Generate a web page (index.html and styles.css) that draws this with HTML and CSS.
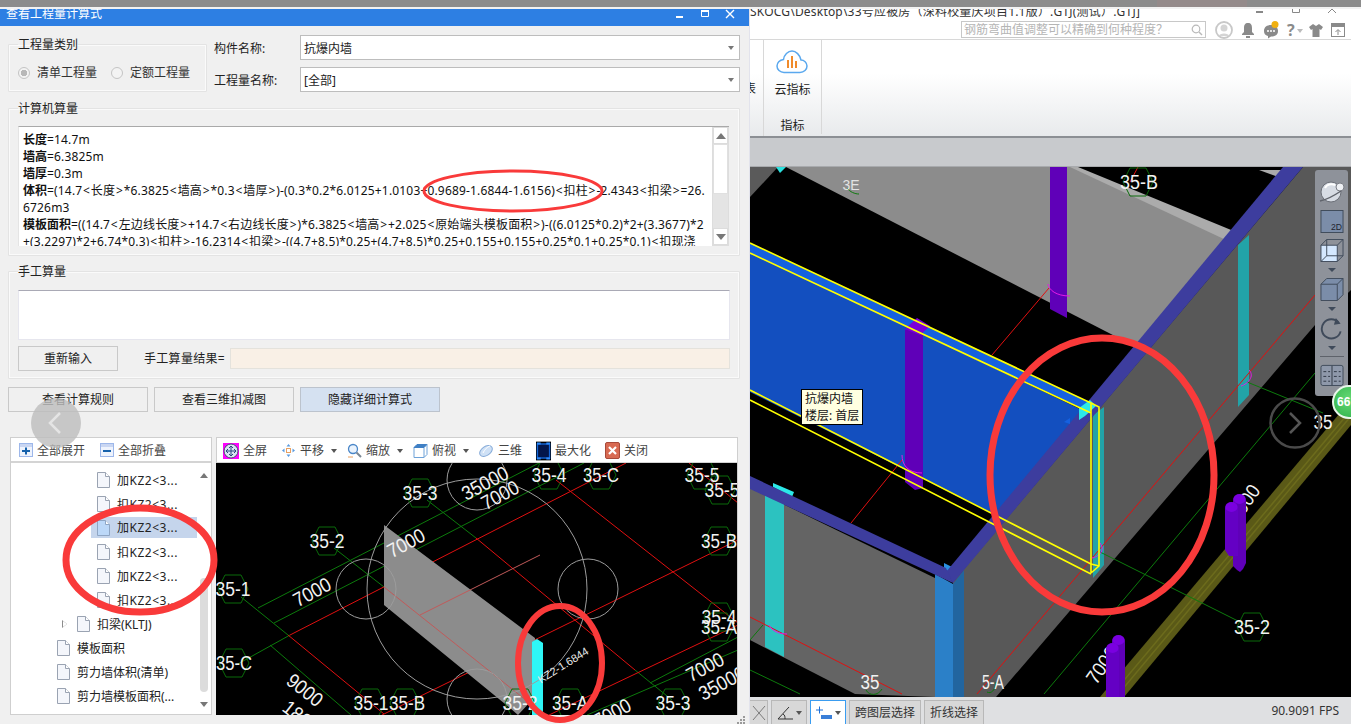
FILE: index.html
```html
<!DOCTYPE html>
<html lang="zh-CN">
<head>
<meta charset="utf-8">
<title>查看工程量计算式</title>
<link rel="stylesheet" href="styles.css">
</head>
<body>
<svg class="defs" width="0" height="0" aria-hidden="true">
  <defs>
    <symbol id="doc" viewBox="0 0 13 16">
      <path d="M.5.5h8l4 4v11H.5z" fill="#f4f6fb" stroke="#9aa3b2"/>
      <path d="M8.5.5v4h4" fill="#fff" stroke="#9aa3b2"/>
    </symbol>
    <symbol id="docsel" viewBox="0 0 13 16">
      <path d="M.5.5h8l4 4v11H.5z" fill="#bcd8f8" stroke="#8fa6c4"/>
      <path d="M8.5.5v4h4" fill="#fff" stroke="#8fa6c4"/>
    </symbol>
    <polygon id="hex" points="-15,0 -8,-14 8,-14 15,0 8,14 -8,14" fill="none" stroke="#0a6b0a"/>
  </defs>
</svg>

<div class="strip"><span class="strip-tint"></span></div>

<div class="desk">
  <section class="dialog">
    <header class="dlg-title">
      <span class="dlg-name">查看工程量计算式</span>
      <span class="dlg-ctl">
        <svg width="10" height="10" viewBox="0 0 10 10"><path d="M1 7h7v2H1z" fill="#fff"/></svg>
        <svg width="10" height="10" viewBox="0 0 10 10"><path d="M1.500 1.500h7v6h-7z" fill="none" stroke="#fff"/><path d="M1 1h8v2H1z" fill="#fff"/></svg>
        <svg width="10" height="10" viewBox="0 0 10 10"><path d="M1 1l8 8M9 1l-8 8" stroke="#fff" stroke-width="1.400"/></svg>
      </span>
    </header>

    <div class="top-row">
      <fieldset class="group kind">
        <legend>工程量类别</legend>
        <div class="radios">
          <span class="radio on"></span><span class="radio-label">清单工程量</span>
          <span class="radio"></span><span class="radio-label">定额工程量</span>
        </div>
      </fieldset>
      <div class="combos">
        <div class="combo-row"><label>构件名称:</label><div class="combo">抗爆内墙<i class="caret"></i></div></div>
        <div class="combo-row"><label>工程量名称:</label><div class="combo">[全部]<i class="caret"></i></div></div>
      </div>
    </div>

    <fieldset class="group calc">
      <legend>计算机算量</legend>
      <div class="formula">
        <div class="formula-text">
          <div><b>长度</b>=14.7m</div>
          <div><b>墙高</b>=6.3825m</div>
          <div><b>墙厚</b>=0.3m</div>
          <div><b>体积</b>=(14.7<s>&lt;</s>长度<s>&gt;</s>*6.3825<s>&lt;</s>墙高<s>&gt;</s>*0.3<s>&lt;</s>墙厚<s>&gt;</s>)-(0.3*0.2*6.0125+1.0103+0.9689-1.6844-1.6156)<s>&lt;</s>扣柱<s>&gt;</s>-2.4343<s>&lt;</s>扣梁<s>&gt;</s>=26.</div>
          <div>6726m3</div>
          <div><b>模板面积</b>=((14.7<s>&lt;</s>左边线长度<s>&gt;</s>+14.7<s>&lt;</s>右边线长度<s>&gt;</s>)*6.3825<s>&lt;</s>墙高<s>&gt;</s>+2.025<s>&lt;</s>原始端头模板面积<s>&gt;</s>)-((6.0125*0.2)*2+(3.3677)*2</div>
          <div>+(3.2297)*2+6.74*0.3)<s>&lt;</s>扣柱<s>&gt;</s>-16.2314<s>&lt;</s>扣梁<s>&gt;</s>-((4.7+8.5)*0.25+(4.7+8.5)*0.25+0.155+0.155+0.25*0.1+0.25*0.1)<s>&lt;</s>扣现浇</div>
        </div>
        <div class="vscroll">
          <span class="vbtn"><i class="tri up"></i></span>
          <span class="vthumb"></span>
          <span class="vtrack"></span>
          <span class="vbtn"><i class="tri down"></i></span>
        </div>
      </div>
    </fieldset>

    <fieldset class="group manual">
      <legend>手工算量</legend>
      <div class="manual-box"></div>
      <div class="manual-row">
        <button class="btn reset">重新输入</button>
        <span class="result-label">手工算量结果=</span>
        <span class="result"></span>
      </div>
    </fieldset>

    <div class="actions">
      <button class="btn act">查看计算规则</button>
      <button class="btn act">查看三维扣减图</button>
      <button class="btn act active">隐藏详细计算式</button>
    </div>

    <div class="panels">
      <aside class="tree-panel">
        <div class="tree-tools">
          <span class="tool">
            <svg width="14" height="14" viewBox="0 0 14 14"><rect x=".5" y=".5" width="13" height="13" fill="#eef3fd" stroke="#9db7ea"/><rect x="1" y="1" width="12" height="3" fill="#c9d6f2"/><path d="M3 8h8M7 4.500v7" stroke="#1561ab" stroke-width="2"/></svg>全部展开
          </span>
          <span class="tool">
            <svg width="14" height="14" viewBox="0 0 14 14"><rect x=".5" y=".5" width="13" height="13" fill="#eef3fd" stroke="#9db7ea"/><rect x="1" y="1" width="12" height="3" fill="#c9d6f2"/><path d="M3 8h8" stroke="#1561ab" stroke-width="2"/></svg>全部折叠
          </span>
        </div>
        <div class="tree">
          <div class="node lv3"><svg class="ic"><use href="#doc"/></svg>加KZ2&lt;3...</div>
          <div class="node lv3"><svg class="ic"><use href="#doc"/></svg>扣KZ2&lt;3...</div>
          <div class="node lv3 selected"><svg class="ic"><use href="#docsel"/></svg>加KZ2&lt;3...</div>
          <div class="node lv3"><svg class="ic"><use href="#doc"/></svg>扣KZ2&lt;3...</div>
          <div class="node lv3"><svg class="ic"><use href="#doc"/></svg>加KZ2&lt;3...</div>
          <div class="node lv3"><svg class="ic"><use href="#doc"/></svg>扣KZ2&lt;3...</div>
          <div class="node lv2"><i class="expander"></i><svg class="ic"><use href="#doc"/></svg>扣梁(KLTJ)</div>
          <div class="node lv1"><svg class="ic"><use href="#doc"/></svg>模板面积</div>
          <div class="node lv1"><svg class="ic"><use href="#doc"/></svg>剪力墙体积(清单)</div>
          <div class="node lv1"><svg class="ic"><use href="#doc"/></svg>剪力墙模板面积(...</div>
          <div class="tree-scroll"><i class="tri up small"></i><span class="tree-thumb"></span><i class="tri down small"></i></div>
        </div>
      </aside>

      <div class="view-panel">
        <div class="view-tools">
          <span class="tool v"><svg width="16" height="16" viewBox="0 0 16 16"><rect width="16" height="16" fill="#f0f"/><circle cx="8" cy="8" r="7" fill="#d9e3f2" stroke="#41506e"/><path d="M8 3v10M3 8h10M8 3l-2 2M8 3l2 2M8 13l-2-2M8 13l2-2M3 8l2-2M3 8l2 2M13 8l-2-2M13 8l-2 2" stroke="#2a4a80" fill="none"/></svg>全屏</span>
          <span class="tool v"><svg width="15" height="15" viewBox="0 0 15 15"><path d="M7.500 1l2 2.500h-4zM7.500 14l2-2.500h-4zM1 7.500l2.500-2v4zM14 7.500l-2.500-2v4z" fill="#5a9be0"/><rect x="5.500" y="5.500" width="4" height="4" fill="none" stroke="#e8a060"/></svg>平移<i class="caret dark"></i></span>
          <span class="tool v"><svg width="15" height="16" viewBox="0 0 15 16"><circle cx="6" cy="6" r="4.500" fill="#eaf3fd" stroke="#4a86c8" stroke-width="1.300"/><path d="M9.500 9.500l4.500 4.500" stroke="#7a8794" stroke-width="2"/><path d="M1 14h5" stroke="#e8a060"/></svg>缩放<i class="caret dark"></i></span>
          <span class="tool v"><svg width="15" height="16" viewBox="0 0 15 16"><path d="M1 4.500h10v10H1z" fill="#fff" stroke="#6ea2d8"/><path d="M1 4.500L4 1.500h10L11 4.500z" fill="#3f7fc4" stroke="#3f7fc4"/><path d="M14 1.500v10l-3 3" fill="none" stroke="#6ea2d8"/></svg>俯视<i class="caret dark"></i></span>
          <span class="tool v"><svg width="15" height="15" viewBox="0 0 15 15"><ellipse cx="7" cy="8" rx="7" ry="4.500" transform="rotate(-35 7 8)" fill="#cfe1f6" stroke="#86abd8"/><path d="M4 10c2-4 4-6 7-7" stroke="#fff" fill="none"/></svg>三维</span>
          <span class="tool v"><svg width="15" height="20" viewBox="0 0 16 20"><rect width="16" height="20" fill="#000"/><rect x="1.500" y="2.500" width="13" height="15" fill="#03164a" stroke="#1466d8" stroke-width="1.500"/><path d="M1 2h4M11 2h4M1 18h4M11 18h4" stroke="#2d8cff" stroke-width="2"/></svg>最大化</span>
          <span class="tool v"><svg width="15" height="17" viewBox="0 0 15 17"><rect x=".5" y=".5" width="14" height="16" rx="1.500" fill="#d86a52" stroke="#a84a3a"/><path d="M4 5l7 7M11 5l-7 7" stroke="#fff" stroke-width="2.200"/></svg>关闭</span>
        </div>
        <div class="mini-view">
          <svg class="mini" viewBox="216 463 522 252" width="522" height="252">
            <g fill="none" stroke-width="1">
              <g stroke="#0c7a0c">
                <path d="M258 608L539 463M274 623L584 463M236 665L290 635M241 597L288 635M270 645L351 715M334 548L384 587M427 500L476 538M635 670L672 700M650 683L738 637M587 715L738 650"/>
              </g>
              <g stroke="#e01010">
                <path d="M290 635L626 463M382 715L738 540M549 715L738 625M288 635L384 714M384 587L532 705M476 538L635 670M556 480L738 623M689 463L738 503"/>
              </g>
            </g>
            <polygon points="384,525 535,638 532,700 518,715 510,708 384,605" fill="#8c8c8c"/>
            <path d="M384 587L532 705M420 615L540 555" stroke="#c05a5a" fill="none"/>
            <polygon points="532,642 537,639 543,643 543,715 532,715" fill="#2ef6f6"/>
            <g fill="none" stroke="#9c9c9c">
              <circle cx="477" cy="589" r="110"/>
              <circle cx="477" cy="480" r="30"/>
              <circle cx="366" cy="589" r="30"/>
              <circle cx="588" cy="589" r="30"/>
              <circle cx="477" cy="699" r="30"/>
            </g>
            <use href="#hex" x="233" y="589"/><use href="#hex" x="327" y="541"/><use href="#hex" x="420" y="493"/>
            <use href="#hex" x="549" y="475"/><use href="#hex" x="601" y="475"/><use href="#hex" x="702" y="475"/>
            <use href="#hex" x="720" y="490"/><use href="#hex" x="719" y="541"/><use href="#hex" x="719" y="617"/>
            <use href="#hex" x="719" y="627"/><use href="#hex" x="234" y="663"/><use href="#hex" x="370" y="703"/>
            <use href="#hex" x="405" y="703"/><use href="#hex" x="520" y="703"/><use href="#hex" x="570" y="703"/><use href="#hex" x="673" y="703"/>
            <g class="cad">
              <text x="233" y="596" textLength="35" lengthAdjust="spacingAndGlyphs">35-1</text>
              <text x="327" y="548" textLength="35" lengthAdjust="spacingAndGlyphs">35-2</text>
              <text x="420" y="500" textLength="35" lengthAdjust="spacingAndGlyphs">35-3</text>
              <text x="549" y="482" textLength="35" lengthAdjust="spacingAndGlyphs">35-4</text>
              <text x="601" y="482" textLength="36" lengthAdjust="spacingAndGlyphs">35-C</text>
              <text x="702" y="482" textLength="35" lengthAdjust="spacingAndGlyphs">35-5</text>
              <text x="722" y="497" textLength="35" lengthAdjust="spacingAndGlyphs">35-5</text>
              <text x="719" y="548" textLength="36" lengthAdjust="spacingAndGlyphs">35-B</text>
              <text x="719" y="624" textLength="35" lengthAdjust="spacingAndGlyphs">35-4</text>
              <text x="719" y="634" textLength="36" lengthAdjust="spacingAndGlyphs">35-A</text>
              <text x="234" y="670" textLength="36" lengthAdjust="spacingAndGlyphs">35-C</text>
              <text x="371" y="710" textLength="35" lengthAdjust="spacingAndGlyphs">35-1</text>
              <text x="407" y="710" textLength="36" lengthAdjust="spacingAndGlyphs">35-B</text>
              <text x="520" y="710" textLength="35" lengthAdjust="spacingAndGlyphs">35-2</text>
              <text x="570" y="710" textLength="36" lengthAdjust="spacingAndGlyphs">35-A</text>
              <text x="673" y="710" textLength="35" lengthAdjust="spacingAndGlyphs">35-3</text>
              <text x="312" y="599" textLength="40" lengthAdjust="spacingAndGlyphs" transform="rotate(-28 312 592)">7000</text>
              <text x="406" y="550" textLength="40" lengthAdjust="spacingAndGlyphs" transform="rotate(-28 406 543)">7000</text>
              <text x="485" y="490" textLength="50" lengthAdjust="spacingAndGlyphs" transform="rotate(-28 485 483)">35000</text>
              <text x="500" y="502" textLength="40" lengthAdjust="spacingAndGlyphs" transform="rotate(-28 500 495)">7000</text>
              <text x="305" y="697" textLength="40" lengthAdjust="spacingAndGlyphs" transform="rotate(38 305 690)">9000</text>
              <text x="305" y="727" textLength="50" lengthAdjust="spacingAndGlyphs" transform="rotate(38 305 720)">18000</text>
              <text x="705" y="674" textLength="40" lengthAdjust="spacingAndGlyphs" transform="rotate(-28 705 667)">7000</text>
              <text x="722" y="690" textLength="50" lengthAdjust="spacingAndGlyphs" transform="rotate(-28 722 683)">35000</text>
              <text x="612" y="720" textLength="40" lengthAdjust="spacingAndGlyphs" transform="rotate(-28 612 713)">7000</text>
            </g>
            <text class="kz" x="563" y="669" transform="rotate(-32 563 665)">KZ2-1.6844</text>
          </svg>
        </div>
      </div>
    </div>
  </section>

  <section class="app">
    <div class="app-title">
      <span class="app-name">SKOCG\Desktop\33号应被房（深料校量庆项目1.1版）.GTJ(测试）.GTJ]</span>
      <span class="app-ctl">
        <svg width="10" height="8" viewBox="0 0 10 8"><path d="M1 2h7v2H1z" fill="#888"/></svg>
        <svg width="10" height="8" viewBox="0 0 10 8"><path d="M1.500 0v3.500h7V0" fill="none" stroke="#888"/></svg>
        <svg width="10" height="8" viewBox="0 0 10 8"><path d="M1 4L5 0l4 4" fill="none" stroke="#888"/></svg>
      </span>
    </div>
    <div class="app-search">
      <div class="search"><span>钢筋弯曲值调整可以精确到何种程度？</span>
        <svg width="12" height="12" viewBox="0 0 12 12"><circle cx="5" cy="5" r="3.800" fill="none" stroke="#b9b9b9" stroke-width="1.200"/><path d="M8 8l3 3" stroke="#b9b9b9" stroke-width="1.400"/></svg>
      </div>
      <svg class="hd avatar" width="18" height="18" viewBox="0 0 18 18"><circle cx="9" cy="9" r="8" fill="#fff" stroke="#c8c8c8" stroke-width="1.800"/><circle cx="9" cy="7" r="3.500" fill="#d4d4d4"/><path d="M3.500 15c1-3.500 10-3.500 11 0" fill="#d4d4d4"/></svg>
      <svg class="hd" width="14" height="16" viewBox="0 0 14 16"><path d="M7 1c3 0 4 2 4 5v4l2 2v1H1v-1l2-2V6c0-3 1-5 4-5z" fill="#8a8a8a"/><rect x="5" y="14" width="4" height="2" fill="#8a8a8a"/></svg>
      <svg class="hd" width="16" height="18" viewBox="0 0 16 18"><path d="M8 4c4 0 7 2 7 6s-3 5.500-7 5.500l-3 2v-2.500C2 14.500 1 12.500 1 10c0-4 3-6 7-6z" fill="#8a8a8a"/><circle cx="5" cy="10" r="1" fill="#fff"/><circle cx="8" cy="10" r="1" fill="#fff"/><circle cx="11" cy="10" r="1" fill="#fff"/><circle cx="12" cy="3.500" r="3.500" fill="#f0b010"/></svg>
      <span class="help">?<i class="caret soft"></i></span>
      <svg class="hd" width="14" height="14" viewBox="0 0 14 14"><path d="M4 1L0 4l2 3 1.500-1v8h7V6L12 7l2-3-4-3-3 2z" fill="#8a8a8a"/></svg>
      <svg class="hd" width="14" height="14" viewBox="0 0 14 14"><rect x=".5" y=".5" width="13" height="13" fill="#fff" stroke="#8a8a8a"/><rect x="1" y="1" width="12" height="3" fill="#8a8a8a"/><path d="M7 12V7M4.500 9L7 6.500 9.500 9" fill="none" stroke="#8a8a8a"/></svg>
    </div>
    <div class="ribbon">
      <div class="rib-sliver">表</div>
      <div class="rib-group">
        <div class="rib-item">
          <svg width="32" height="24" viewBox="0 0 32 24"><path d="M8 22.500h16c4 0 7-3 7-6.500s-3-6-6-6c-1-5-5-9-9-9s-8 4-8.500 8.500c-4 .5-6.500 3.500-6.500 6.500 0 3.500 3 6.500 7 6.500z" fill="#fff" stroke="#5aa8ee" stroke-width="1.500"/><path d="M12 10v8M16 6v12M20 11v7" stroke="#f08b2c" stroke-width="2"/></svg>
          <span>云指标</span>
        </div>
        <div class="rib-name">指标</div>
      </div>
    </div>
    <div class="band"></div>
    <div class="stage">
      <svg class="scene" viewBox="750 167 601 530" width="601" height="530">
        <rect x="750" y="167" width="601" height="530" fill="#000"/>
        <!-- olive beam -->
        <polygon points="1351,400 1351,425 1124,697 1100,697" fill="#5a5917"/>
        <path d="M1351 410L1110 697M1351 416L1116 697" stroke="#6c6b1c" stroke-width="1.500"/>
        <!-- back wall -->
        <polygon points="750,167 778,167 750,197" fill="#5a5a5a"/>
        <polygon points="776,167 786,167 780,173" fill="#2ce0de"/>
        <polygon points="786,167 1072,167 1230,232 1142,350" fill="#8c8c8c"/>
        <polygon points="1070,167 1078,167 1236,232 1226,240" fill="#ababab"/>
        <polygon points="1259,170 1288,170 1281,178" fill="#ababab"/>
        <polygon points="1050,167 1067,167 1067,318 1050,309" fill="#5f00b8"/>
        <!-- right wall -->
        <polygon points="1303,167 1351,167 1351,290 1315,325 996,697 953,697 953,582" fill="#585858"/>
        <polygon points="1238,245 1249,235 1249,395 1238,407" fill="#22a3a8"/>
        <polygon points="1223,240 1233,228 1239,234 1227,248" fill="#2ce8e8"/>
        <polygon points="1093,415 1104,407 1104,565 1093,578" fill="#22a3a8"/>
        <!-- left wall -->
        <polygon points="750,488 935,578 935,697 855,694 750,640" fill="#646464"/>
        <polygon points="765,493 784,503 784,657 765,647" fill="#2cc2c0"/>
        <polygon points="935,574 953,584 953,697 935,697" fill="#2b80c8"/>
        <polygon points="953,584 964,570 964,697 953,697" fill="#22659f"/>
        <polygon points="773,483 794,492 792,497 773,487" fill="#2ce8e8"/>
        <polygon points="944,563 958,570 953,574 944,569" fill="#2b90e0"/>
        <!-- blue wall -->
        <polygon points="750,252 1082,410 1001,518 750,392" fill="#134fbf"/>
        <polygon points="750,243 1091,403 1091,413 750,253" fill="#1561e0"/>
        <polygon points="905,330 923,327 923,488 915,490 905,482" fill="#5f00b8"/>
        <polygon points="905,329 917,318 930,326 920,335" fill="#7a00d8"/>
        <!-- navy beams -->
        <polygon points="1283,167 1303,167 953,583 946,572" fill="#3d3d9e"/>
        <polygon points="750,476 946,568 953,583 750,489" fill="#3d3d9e"/>
        <!-- cyan corner -->
        <polygon points="1079,408 1090,400 1096,406 1085,416 1079,420" fill="#2ce8e8"/>
        <!-- thin lines -->
        <g fill="none" stroke="#e01010">
          <path d="M992 355L1049 288M851 523L902 460M977 694L1315 295M750 617L902 694M1138 167L1130 182"/>
        </g>
        <g fill="none" stroke="#0c7a0c">
          <path d="M1100 552L1252 628M1044 694L1315 373M1247 382L1323 413M750 670L800 694M750 640L763 625"/>
          <path d="M847 188c3 4 8 6 12 6M866 690c3 6 12 6 16-1M987 692c4 2 8-1 9-10"/>
        </g>
        <g fill="none" stroke="#e61ae6">
          <path d="M1048 284c1 6 8 12 22 12M902 455c0 10 6 18 20 18M1100 543c6 8-2 14-8 15M769 625c3 6 10 9 18 9M1249 370c6 6-1 14-8 16"/>
        </g>
        <!-- selection -->
        <g fill="none" stroke="#ff0" stroke-width="1.600">
          <path d="M750 243L1091 403V573M750 253L1091 413M1091 403L1099 407V566L1091 573"/>
          <path d="M750 390L1091 564M750 400L1091 574M1091 564L1099 566"/>
        </g>
        <polygon points="1064,422 1070,418 1070,424" fill="#1561e0"/>
        <!-- labels -->
        <use href="#hex" x="1138" y="182"/><use href="#hex" x="1252" y="627"/>
        <g class="cad">
          <text x="1139" y="189" textLength="38" lengthAdjust="spacingAndGlyphs">35-B</text>
          <text x="851" y="190" class="faint">3E</text>
          <text x="1323" y="429" textLength="19" lengthAdjust="spacingAndGlyphs">35</text>
          <text x="870" y="689" textLength="19" lengthAdjust="spacingAndGlyphs">35</text>
          <text x="993" y="689" textLength="22" lengthAdjust="spacingAndGlyphs">5-A</text>
          <text x="1252" y="634" textLength="36" lengthAdjust="spacingAndGlyphs">35-2</text>
          <text x="1244" y="510" textLength="40" lengthAdjust="spacingAndGlyphs" transform="rotate(-55 1244 503)">7000</text>
          <text x="1102" y="672" textLength="40" lengthAdjust="spacingAndGlyphs" transform="rotate(-55 1102 665)">7000</text>
        </g>
        <!-- purple clusters -->
        <path d="M1233 566V500a6 5 0 0 1 13 0V563l-3 6-3 3-3-2z" fill="#5f00b8"/>
        <path d="M1225 550V508a6 5 0 0 1 13 0V556h-9z" fill="#6400c4"/>
        <ellipse cx="1239.500" cy="499" rx="6" ry="5" fill="#7a00e0"/>
        <ellipse cx="1231.500" cy="507" rx="6" ry="5" fill="#7a00e0"/>
        <path d="M1112 697V641a6 5 0 0 1 13 0V697z" fill="#5f00b8"/>
        <path d="M1106 697V649a6 5 0 0 1 13 0V697z" fill="#6400c4"/>
        <ellipse cx="1118.500" cy="640" rx="6" ry="5" fill="#7a00e0"/>
        <ellipse cx="1112.500" cy="648" rx="6" ry="5" fill="#7a00e0"/>
      </svg>

      <div class="hover-tip">抗爆内墙<br>楼层: 首层</div>

      <nav class="rail">
        <svg class="rail-ball" viewBox="0 0 26 24"><circle cx="12" cy="12" r="10" fill="#d7dce4" stroke="#6c7078"/><path d="M6 8a7 6 0 0 1 10-3" stroke="#fff" stroke-width="2" fill="none"/><circle cx="21" cy="7" r="4" fill="#eef0f4" stroke="#7b7e86"/><path d="M1 21c6-1 15-6 21-10" stroke="#60646c" fill="none" stroke-width="1.500"/></svg>
        <svg viewBox="0 0 24 24"><rect x=".5" y=".5" width="23" height="23" fill="#7b8da9" stroke="#3f4a5a"/><text x="11" y="21" class="rail-2d">2D</text></svg>
        <svg viewBox="0 0 24 24"><path d="M.5 6.500h17v17H.5z" fill="#d4e8ff" stroke="#3f4a5a"/><path d="M.5 6.500l6-6h17v17l-6 6M17.500 6.500l6-6M6.500.5v17h17M6.500 17.500l-6 6" fill="none" stroke="#3f4a5a"/></svg>
        <i class="rail-caret"></i>
        <svg viewBox="0 0 24 24"><path d="M.5 6.500l6-6h17v17l-6 6H.5z" fill="#7b8da9" stroke="#3f4a5a"/><path d="M.5 6.500h17v17M17.500 6.500l6-6" fill="none" stroke="#3f4a5a"/></svg>
        <i class="rail-caret"></i>
        <svg viewBox="0 0 24 24"><path d="M19 6a10 10 0 1 0 2 9" fill="none" stroke="#3f4a5a" stroke-width="2"/><path d="M16 1l5 6-7 1z" fill="#3f4a5a"/></svg>
        <i class="rail-caret"></i>
        <span class="rail-sep"></span>
        <svg viewBox="0 0 24 24"><rect x=".5" y="2.500" width="23" height="21" rx="2" fill="#8e98aa" stroke="#3f4a5a"/><path d="M12 3v20M3 9h3M3 14h3M3 19h3M8 9h2M8 14h2M8 19h2M14 9h3M14 14h3M14 19h3M19 9h2M19 14h2M19 19h2" stroke="#2e3644"/></svg>
      </nav>
      <div class="next-btn"><svg width="52" height="52" viewBox="0 0 52 52"><circle cx="26" cy="26" r="24.500" fill="none" stroke="#4a4a4a" stroke-width="2.500"/><path d="M21 16l10 10-10 10" fill="none" stroke="#555" stroke-width="2.500"/></svg></div>
      <div class="badge">66</div>
    </div>
    <div class="status">
      <span class="st-btn st-x"><svg width="14" height="18" viewBox="0 0 14 18"><path d="M1 2l12 14M13 2L1 16" stroke="#7a7a7a" fill="none"/></svg></span>
      <span class="st-btn st-ang"><svg width="18" height="16" viewBox="0 0 18 16"><path d="M2 14h15M2 14L13 2" stroke="#333" fill="none"/><path d="M7 9c2 1 2 3 2 5" stroke="#333" fill="none"/></svg><i class="caret dark"></i></span>
      <span class="st-btn st-on"><svg width="18" height="16" viewBox="0 0 18 16"><path d="M1 5h7M4.500 1.500v7" stroke="#1b6fd8" fill="none"/><rect x="6" y="10" width="11" height="4" fill="#3a7fd8"/></svg><i class="caret dark"></i></span>
      <span class="st-btn st-text">跨图层选择</span>
      <span class="st-btn st-text">折线选择</span>
      <span class="fps">90.9091 FPS</span>
    </div>
  </section>
</div>

<svg class="annot" viewBox="0 0 1361 724" width="1361" height="724" aria-hidden="true">
  <circle cx="56" cy="423" r="25" fill="#bdbdbd" fill-opacity=".8"/>
  <path d="M60 413L50 423l10 10" fill="none" stroke="#e4e4e4" stroke-width="2.500"/>
  <g fill="none" stroke="#f93a3a">
    <ellipse cx="513" cy="191" rx="89" ry="20" stroke-width="3"/>
    <ellipse cx="140" cy="560" rx="74" ry="52" stroke-width="7"/>
    <ellipse cx="560" cy="663" rx="42" ry="57" stroke-width="6"/>
    <ellipse cx="1102" cy="475" rx="112" ry="137" stroke-width="7"/>
  </g>
  <path d="M743 716h2v2h-2zM740 719h2v2h-2zM743 719h2v2h-2zM737 722h2v2h-2zM740 722h2v2h-2zM743 722h2v2h-2z" fill="#9a9a9a"/>
</svg>
</body>
</html>
```
FILE: styles.css
```css
* { box-sizing: border-box; }
html, body { margin: 0; padding: 0; }
body {
  width: 1361px;
  height: 724px;
  overflow: hidden;
  position: relative;
  background: #fff;
  font: 12px/17px "Noto Sans", "Noto Sans CJK SC", sans-serif;
  color: #222;
}
.defs { position: absolute; }
.strip { height: 9px; background: #f2f2f2; position: relative; }
.strip::before { content: ""; display: block; height: 7px; background: #8c8c8c; }
.strip-tint { position: absolute; left: 1157px; top: 0; width: 90px; height: 7px; background: #948a8a; }
.desk { display: flex; height: 715px; }

/* dialog */
.dialog { width: 750px; height: 715px; background: #f0f0f0; flex: none; border-right: 1px solid #e2e3ec; }
.dlg-title {
  height: 17px; background: #2d7fe3; color: #fff; display: flex; justify-content: space-between;
  overflow: hidden; padding: 0 14px 0 6px;
}
.dlg-name { display: block; margin-top: -4px; line-height: 17px; }
.dlg-ctl { display: flex; gap: 15px; }

.top-row { display: flex; margin: 9px 9px 0 8px; gap: 7px; }
fieldset.group {
  margin: 0; padding: 0; border: 1px solid #e3e3e3; border-radius: 1px; min-width: 0;
  box-shadow: inset 0 0 0 1px #fafafa;
}
fieldset.group legend { margin-left: 9px; padding: 0; line-height: 18px; height: 16px; color: #222; }
.kind { width: 199px; height: 56px; margin-top: 1px !important; flex: none; }
.radios { display: flex; align-items: center; padding-left: 9px; margin-top: 12px; height: 17px; }
.radio { width: 12px; height: 12px; border-radius: 50%; border: 1px solid #c4c4c4; background: #f3f3f3; flex: none; }
.radio.on { background: radial-gradient(circle, #b8b8b8 0 3px, #f3f3f3 3.500px); }
.radio-label { margin-left: 7px; width: 74px; color: #333; }
.radio-label:last-child { width: auto; }

.combos { flex: 1; display: flex; flex-direction: column; gap: 7px; }
.combo-row { display: flex; align-items: center; height: 25px; }
.combo-row label { width: 86px; flex: none; padding-top: 2px; }
.combo {
  flex: 1; height: 25px; background: #fff; border: 1px solid #bdbdbd; padding: 4px 3px 0; line-height: 17px; position: relative;
}
.caret { display: inline-block; width: 0; height: 0; border-left: 3px solid transparent; border-right: 3px solid transparent; border-top: 4px solid #777; }
.combo .caret { position: absolute; right: 5px; top: 10px; }
.caret.dark { border-top-color: #555; margin-left: 3px; margin-right: -4px; }
.caret.soft { border-top-color: #bbb; margin-left: 2px; vertical-align: middle; }

.calc { margin: 8px 9px 0 8px !important; height: 156px; }
.formula {
  margin: 10px 0 0 9px; width: 711px; height: 120px; background: #fff; border-top: 1px solid #a9a9a9; border-left: 1px solid #e4e4e4;
  display: flex; overflow: hidden;
}
.formula-text { flex: 1; padding: 4px 0 0 4px; overflow: hidden; white-space: nowrap; line-height: 17px; color: #111; font-size: 12px; letter-spacing: .17px; }
.formula-text b { font-weight: 700; letter-spacing: 0; }
.formula-text s { text-decoration: none; padding: 0 .75px; }
.vscroll { width: 17px; flex: none; display: flex; flex-direction: column; background: #ededed; border: 1px solid #ddd; border-top: none; }
.vbtn { height: 17px; background: #fff; border: 1px solid #dcdcdc; display: flex; align-items: center; justify-content: center; flex: none; }
.vthumb { height: 50px; background: #fff; border: 1px solid #e0e0e0; flex: none; }
.vtrack { flex: 1; background: #e4e4e4; }
.tri { display: block; width: 0; height: 0; border-left: 5px solid transparent; border-right: 5px solid transparent; }
.tri.up { border-bottom: 6px solid #777; }
.tri.down { border-top: 6px solid #777; }
.tri.small { border-left-width: 4px; border-right-width: 4px; }
.tri.small.up { border-bottom-width: 5px; }
.tri.small.down { border-top-width: 5px; }

.manual { margin: 7px 9px 0 8px !important; height: 116px; }
.manual-box { margin: 11px 0 0 9px; width: 712px; height: 50px; background: #fff; border: 1px solid #e6e6ee; border-top: 1px solid #a9a9b5; }
.manual-row { display: flex; align-items: center; margin: 6px 0 0 9px; height: 25px; }
.btn {
  font: inherit; color: #222; background: #f0f0f0; border: 1px solid #c9c9c9; padding: 0; height: 25px; display: block;
}
.reset { width: 100px; }
.result-label { margin-left: 26px; width: 86px; letter-spacing: .3px; }
.result { width: 500px; height: 21px; background: #f9f0e6; border: 1px solid #e4e2dc; }

.actions { display: flex; gap: 6px; margin: 8px 0 0 8px; }
.act { width: 140px; }
.act.active { background: #d5e1f1; border-color: #bcc3cd; }

.panels { display: flex; margin: 25px 0 0 10px; gap: 4px; height: 278px; }
.tree-panel { width: 202px; border: 1px solid #cfcfcf; background: #fff; display: flex; flex-direction: column; }
.tree-tools { height: 25px; border-bottom: 2px solid #d4d4d4; display: flex; padding: 1px 0 0 8px; gap: 15px; align-items: center; flex: none; color: #444; }
.tool { display: flex; align-items: center; gap: 4px; white-space: nowrap; }
.tree { position: relative; flex: 1; padding-top: 5px; overflow: hidden; }
.node { height: 24px; display: flex; align-items: center; white-space: nowrap; color: #222; }
.ic { width: 13px; height: 16px; flex: none; margin-right: 7px; }
.lv3 { padding-left: 86px; margin-right: 14px; letter-spacing: .5px; }
.lv3.selected { background: #c5d5ec; margin-left: 80px; padding-left: 6px; height: 21px; margin-top: 1px; margin-bottom: 2px; }
.lv2 { padding-left: 51px; }
.lv1 { padding-left: 46px; }
.expander { width: 0; height: 0; border-left: 5px solid #8c8c8c; border-top: 4px solid transparent; border-bottom: 4px solid transparent; margin-right: 10px; position: relative; }
.expander::after { content: ""; position: absolute; left: -4px; top: -3px; border-left: 4px solid #fff; border-top: 3px solid transparent; border-bottom: 3px solid transparent; }
.tree-scroll { position: absolute; right: 3px; top: 10px; bottom: 7px; width: 9px; display: flex; flex-direction: column; align-items: center; justify-content: space-between; }
.tree-thumb { position: absolute; top: 105px; height: 114px; left: 1px; width: 8px; background: #dcdcdc; border-radius: 4px; }

.view-panel { width: 522px; border: 1px solid #cfcfcf; border-bottom: none; background: #fff; display: flex; flex-direction: column; }
.view-tools { height: 25px; border-bottom: 1px solid #d4d4d4; display: flex; align-items: center; padding: 1px 0 0 6px; gap: 14px; flex: none; color: #444; }
.tool.v { gap: 4px; }
.mini-view { flex: 1; overflow: hidden; background: #000; margin-left: -1px; }
.mini { display: block; }
.cad text { font: 20px "Liberation Sans", sans-serif; fill: #f2f2f2; text-anchor: middle; }
.cad text.faint { font-size: 14px; opacity: .85; }
.kz { font: 11px "Liberation Sans", sans-serif; fill: #e8e8e8; text-anchor: middle; }

/* app */
.app { flex: 1; display: flex; flex-direction: column; padding-right: 10px; min-width: 0; background: #fff; }
.app-title { height: 11px; display: flex; justify-content: space-between; overflow: hidden; flex: none; }
.app-name { display: block; margin-top: -6px; white-space: nowrap; font-size: 12px; letter-spacing: .2px; color: #333; }
.app-ctl { display: flex; gap: 26px; padding-right: 14px; }
.app-search { height: 20px; border-bottom: 1px solid #d8d8d8; display: flex; align-items: center; padding-left: 211px; flex: none; gap: 8px; }
.search { width: 245px; height: 17px; border: 1px solid #c8c8c8; display: flex; align-items: center; justify-content: space-between; padding: 0 2px; margin-right: 1px; }
.search span { color: #b5b5b5; font-size: 12px; white-space: nowrap; }
.hd { flex: none; }
.help { color: #8a8a8a; font: 700 16px/16px "Noto Sans", sans-serif; white-space: nowrap; width: 14px; }
.ribbon { height: 98px; flex: none; background: linear-gradient(#fff 35%, #e8eaec); border-bottom: 2px solid #8c8f94; display: flex; }
.rib-sliver { width: 14px; border-right: 1px solid #d8d8d8; font-size: 12px; padding-top: 40px; overflow: hidden; text-indent: -6px; flex: none; }
.rib-group { width: 58px; border-right: 1px solid #d8d8d8; display: flex; flex-direction: column; align-items: center; flex: none; margin-bottom: 2px; }
.rib-item { display: flex; flex-direction: column; align-items: center; padding-top: 10px; gap: 7px; height: 79px; }
.rib-name { line-height: 16px; }
.band { height: 29px; background: #c8cacd; border-bottom: 1px solid #a8aaad; flex: none; }
.stage { height: 530px; position: relative; overflow: hidden; flex: none; }
.scene { display: block; }
.hover-tip {
  position: absolute; left: 51px; top: 222px; width: 62px; height: 36px; background: #ffffe1; border: 1px solid #000;
  padding: 0 3px; line-height: 17px; color: #111; white-space: nowrap;
}
.rail {
  position: absolute; left: 565px; top: 3px; width: 33px; height: 226px; background: #8e929a; border-radius: 3px;
  display: flex; flex-direction: column; align-items: center; padding-top: 10px; gap: 6px;
}
.rail svg { flex: none; width: 24px; height: 23px; }
.rail svg.rail-ball { width: 26px; height: 24px; }
.rail-2d { font: 9px "Liberation Sans", sans-serif; fill: #1f2530; text-anchor: start; }
.rail-caret { width: 0; height: 0; border-left: 4px solid transparent; border-right: 4px solid transparent; border-top: 4px solid #3f4a5a; flex: none; }
.rail-sep { width: 24px; height: 1px; background: #5e626a; flex: none; }
.next-btn { position: absolute; left: 519px; top: 230px; width: 52px; height: 52px; }
.badge {
  position: absolute; left: 582px; top: 218px; width: 34px; height: 34px; border-radius: 50%;
  background: radial-gradient(circle at 50% 40%, #64d873, #2fb14a); border: 2px solid #e8f6ea; color: #fff; font: 700 12px/30px "Liberation Sans", sans-serif; padding-left: 3px;
}
.status { height: 27px; background: #dfe0e2; display: flex; align-items: flex-end; gap: 3px; flex: none; position: relative; }
.st-btn { height: 24px; background: #d8d8d8; border: 1px solid #b8b8b8; border-bottom: none; display: flex; align-items: center; justify-content: center; color: #333; }
.st-x { width: 18px; border-left: none; }
.st-ang { width: 36px; }
.st-on { width: 36px; background: #fff; border: 1px solid #3a9cf0; border-bottom: none; }
.st-text { padding: 0 5px; }
.status .caret.dark { margin-left: 2px; margin-right: 0; }
.fps { margin-left: auto; margin-right: 12px; align-self: center; font-size: 12px; color: #333; }

.annot { position: absolute; left: 0; top: 0; pointer-events: none; }
```
